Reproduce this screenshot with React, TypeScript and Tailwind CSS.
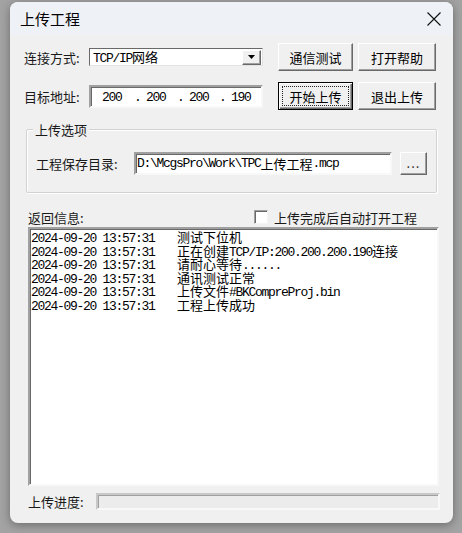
import React from "react";

const raised =
  "bg-[#f0f0f0] border border-t-white border-l-white border-r-[#696969] border-b-[#696969] shadow-[inset_-1px_-1px_0_#a0a0a0]";
const sunken =
  "border-2 border-t-[#a0a0a0] border-l-[#a0a0a0] border-r-[#f8f8f8] border-b-[#f8f8f8] shadow-[inset_1px_1px_0_#696969]";

// SimSun-like run: half-width ascii, full-width CJK
function Sim({ text }: { text: string }) {
  const parts = text.match(/[\x00-\x7f]+|[^\x00-\x7f]+/g) || [];
  return (
    <>
      {parts.map((p, i) =>
        /^[\x00-\x7f]/.test(p) ? (
          <span key={i} className="font-['Liberation_Mono',monospace] tracking-[-1.3px] whitespace-pre">
            {p}
          </span>
        ) : (
          <span key={i} className="font-['Noto_Sans_CJK_SC',sans-serif]">
            {p}
          </span>
        )
      )}
    </>
  );
}

function Button({ label, isDefault, w }: { label: string; isDefault?: boolean; w: string }) {
  if (isDefault) {
    return (
      <div className={`${w} h-[28px] flex bg-[#f0f0f0] border border-black shadow-[inset_1px_1px_0_#fff,inset_-1px_-1px_0_#696969,inset_-2px_-2px_0_#a0a0a0]`}>
        <div className="flex-1 m-[3px] border border-dotted border-[#222] flex items-center justify-center text-[13px] leading-none text-black">
          {label}
        </div>
      </div>
    );
  }
  return (
    <div className={`${w} h-[28px] flex items-center justify-center text-[13px] leading-none text-black ${raised}`}>
      {label}
    </div>
  );
}

const logs = [
  "测试下位机",
  "正在创建TCP/IP:200.200.200.190连接",
  "请耐心等待......",
  "通讯测试正常",
  "上传文件#BKCompreProj.bin",
  "工程上传成功",
];

export default function App() {
  return (
    <div className="w-[462px] h-[533px] bg-[#a3a3a3] pt-[2px] pl-[10px] overflow-hidden font-['Noto_Sans_CJK_SC',sans-serif] text-[#1a1a1a]">
      <div className="w-[443px] h-[521px] rounded-[8px] overflow-hidden bg-[#f0f0f0] shadow-[0_2px_10px_rgba(0,0,0,0.35)] flex flex-col">
        {/* Title bar */}
        <div className="h-[33px] bg-[#eef2f7] flex items-center justify-between pl-[10px] pr-[12px]">
          <span className="text-[15px] leading-none text-black -mt-[1px]">上传工程</span>
          <svg width="14" height="14" viewBox="0 0 14 14">
            <path d="M0.5 0.5 L13.5 13.5 M13.5 0.5 L0.5 13.5" stroke="#111" strokeWidth="1.1" />
          </svg>
        </div>

        <div className="flex flex-col pt-[8px] text-[13px] leading-none">
          {/* Row 1 */}
          <div className="flex items-center h-[28px] pl-[14px]">
            <span className="w-[65px]">连接方式:</span>
            <div className="w-[174px] h-[18px] bg-white flex items-center border border-t-[#696969] border-l-[#696969] border-r-[#e3e3e3] border-b-[#e3e3e3]">
              <span className="flex-1 pl-[3px] text-[13px] text-black">
                <Sim text="TCP/IP网络" />
              </span>
              <div className={`w-[19px] h-[15px] mr-[1px] flex items-center justify-center ${raised}`}>
                <svg width="7" height="4" viewBox="0 0 7 4">
                  <path d="M0 0 H7 L3.5 4 Z" fill="#000" />
                </svg>
              </div>
            </div>
            <div className="ml-[15px] flex gap-[5px]">
              <Button label="通信测试" w="w-[75px]" />
              <Button label="打开帮助" w="w-[78px]" />
            </div>
          </div>

          {/* Row 2 */}
          <div className="flex items-center h-[28px] pl-[14px] mt-[11px]">
            <span className="w-[65px]">目标地址:</span>
            <div className={`w-[174px] h-[23px] bg-white flex items-center text-[13px] text-black ${sunken}`}>
              <span className="ml-[11px] w-[32px]"><Sim text="200" /></span>
              <span className="w-[12px]"><Sim text="." /></span>
              <span className="w-[31px]"><Sim text="200" /></span>
              <span className="w-[12px]"><Sim text="." /></span>
              <span className="w-[30px]"><Sim text="200" /></span>
              <span className="w-[12px]"><Sim text="." /></span>
              <span><Sim text="190" /></span>
            </div>
            <div className="ml-[15px] flex gap-[5px]">
              <Button label="开始上传" w="w-[75px]" isDefault />
              <Button label="退出上传" w="w-[78px]" />
            </div>
          </div>

          {/* Group box */}
          <div className="relative ml-[16px] mt-[19px] w-[411px] h-[64px] border border-[#d2d2d2] rounded-[2px] shadow-[inset_1px_1px_0_#ffffff,1px_1px_0_#ffffff]">
            <span className="absolute left-[6px] top-[-8px] px-[2px] bg-[#f0f0f0] text-[13px] leading-[16px]">
              上传选项
            </span>
            <div className="flex items-center pl-[9px] pt-[22px]">
              <span className="w-[98px]">工程保存目录:</span>
              <div className={`w-[258px] h-[23px] bg-white flex items-center text-[13px] text-black pl-[1px] ${sunken}`}>
                <Sim text="D:\McgsPro\Work\TPC上传工程.mcp" />
              </div>
              <div className={`ml-[8px] w-[27px] h-[23px] flex items-center justify-center text-[13px] ${raised}`}>
                <span className="tracking-[1px] -mt-[2px]">...</span>
              </div>
            </div>
          </div>

          {/* Return info row */}
          <div className="flex items-center h-[20px] mt-[14px] pl-[18px]">
            <span className="w-[226px]">返回信息:</span>
            <div className="w-[14px] h-[14px] bg-white border border-t-[#a0a0a0] border-l-[#a0a0a0] border-r-[#f4f4f4] border-b-[#f4f4f4] shadow-[inset_1px_1px_0_#696969]" />
            <span className="ml-[6px] text-[13px]">上传完成后自动打开工程</span>
          </div>

          {/* Log box */}
          <div className={`ml-[18px] w-[411px] h-[259px] bg-white pl-[1px] pt-[1px] ${sunken}`}>
            {logs.map((m, i) => (
              <div key={i} className="flex h-[13.6px] leading-[13.6px] text-[13px] text-black">
                <span className="w-[146px] shrink-0">
                  <Sim text="2024-09-20 13:57:31" />
                </span>
                <span className="whitespace-nowrap">
                  <Sim text={m} />
                </span>
              </div>
            ))}
          </div>

          {/* Progress row */}
          <div className="flex items-center h-[17px] mt-[7px] pl-[18px]">
            <span className="w-[68px]">上传进度:</span>
            <div className="w-[344px] h-[17px] bg-[#ececec] border-2 border-t-[#c8c8c8] border-l-[#c8c8c8] border-r-[#f8f8f8] border-b-[#f8f8f8] shadow-[inset_1px_1px_0_#a0a0a0]" />
          </div>
        </div>
      </div>
    </div>
  );
}
